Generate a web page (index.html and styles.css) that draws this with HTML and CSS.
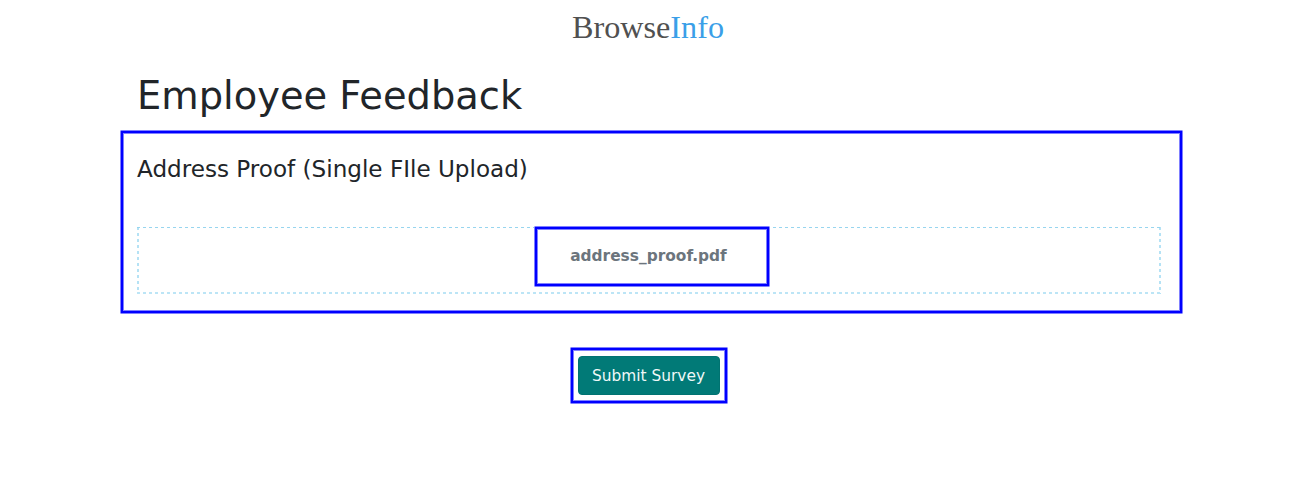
FILE: index.html
```html
<!DOCTYPE html>
<html lang="en">
<head>
<meta charset="utf-8">
<title>Employee Feedback</title>
<link rel="stylesheet" href="styles.css">
</head>
<body>
<header class="brand"><span class="brand-name">Browse<span class="brand-accent">Info</span></span></header>
<main class="survey">
<h1 class="title">Employee Feedback</h1>
<section class="question frame">
<h2 class="question-title">Address Proof (Single FIle Upload)</h2>
<div class="dropzone"><div class="file frame">address_proof.pdf</div></div>
</section>
<div class="actions"><div class="submit-frame frame"><button class="submit" type="button">Submit Survey</button></div></div>
</main>
</body>
</html>
```
FILE: styles.css
```css
* { box-sizing: border-box; }
body { margin: 0; background: #fff; color: #212529; font-family: "DejaVu Sans", sans-serif; }
.brand { height: 54px; display: flex; justify-content: center; padding: 8px 0 0 1px; }
.brand-name { font: 32.2px/38px "Liberation Serif", serif; color: #505050; }
.brand-accent { color: #3a9fe8; }
.survey { width: 1063px; margin-left: 120px; }
.frame { border: 1px solid #8080ff; border-radius: 1px; background: #fff; box-shadow: inset 0 0 0 2px #00f, inset 0 0 0 3px #8080ff; }
.title { margin: 0; padding: 19px 0 0 17px; height: 76px; font-size: 38.4px; line-height: 46px; font-weight: 400; }
.question { height: 184px; padding: 24px 21px 0 16px; }
.question-title { margin: 0; font-size: 23.1px; line-height: 28px; font-weight: 400; }
.dropzone {
  margin-top: 43px; height: 68px; padding-left: 6px; display: flex; justify-content: center; align-items: flex-start;
  background:
    repeating-linear-gradient(90deg, #97d5ef 0 3px, transparent 3px 6px) 0 1px / 100% 1px no-repeat,
    repeating-linear-gradient(90deg, #bce5f6 0 3px, transparent 3px 6px) 0 100% / 100% 2px no-repeat,
    repeating-linear-gradient(#b5e2f5 0 3px, transparent 3px 6px) 0 1px / 2px 100% no-repeat,
    repeating-linear-gradient(#b5e2f5 0 3px, transparent 3px 6px) 100% 1px / 2px 100% no-repeat;
}
.file { width: 236px; height: 61px; padding: 18px 7px 0 0; text-align: center; font-size: 15.4px; line-height: 22px; font-weight: 700; color: #6c757d; }
.actions { margin-top: 33px; display: flex; padding-left: 450px; }
.submit-frame { width: 158px; height: 57px; padding: 8px 7px; }
.submit { display: block; width: 142px; height: 39px; border: 1px solid #017371; border-radius: 4px; background: #017a77; color: #f0f8f8; padding: 0 1px 0 0; font: 15.4px/22px "DejaVu Sans", sans-serif; }
```
